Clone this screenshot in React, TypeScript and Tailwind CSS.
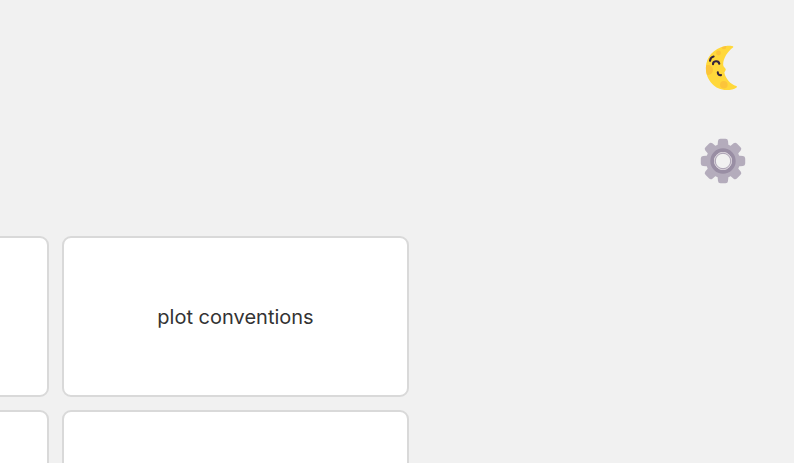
const TOOTH_ANGLES = [0, 45, 90, 135, 180, 225, 270, 315];

function MoonIcon() {
  return (
    <svg viewBox="0 0 56 56" className="size-14" aria-hidden="true">
      <defs>
        <clipPath id="crescent">
          <path d="M38 6.4C37 5.8 33.5 5.6 30 6.3C18.8 8.4 10.9 17.2 10.9 28C10.9 40.3 20 50 31.5 50.1C35.5 50.1 39 49.2 41.6 47.4C42.2 46.9 42 46.1 41.2 46C35.6 44.6 30.5 38.5 29.4 32.8C29.2 31.8 30.8 30.7 30.8 29.5C30.8 28 28.3 27.3 28.2 25C27.9 18.5 32.5 11.5 38 7.4C38.5 7 38.5 6.7 38 6.4Z" />
        </clipPath>
      </defs>
      <g clipPath="url(#crescent)">
        <rect width="56" height="56" fill="#ffd83b" />
        <circle cx="13" cy="30" r="5" fill="#fcc43a" />
        <circle cx="23.5" cy="13" r="2.4" fill="#fcc43a" />
        <circle cx="28.8" cy="44.7" r="3.8" fill="#fcc43a" />
        <circle cx="29" cy="7" r="2.3" fill="#fcc43a" />
      </g>
      <g fill="none" stroke="#33223f" strokeWidth="2.1" strokeLinecap="round">
        <path d="M15 20.8C15.3 18.5 16.8 16.9 18.6 16.5" />
        <path d="M18 24.3C17.8 20.8 23.6 20 24.3 23.8" />
        <path d="M22.8 32.4C22.7 34.5 24.2 35.5 26 35.1" />
      </g>
    </svg>
  );
}

function GearIcon() {
  return (
    <svg viewBox="0 0 56 56" className="size-14" aria-hidden="true">
      <g fill="#b4acbc">
        {TOOTH_ANGLES.map((angle) => (
          <path
            key={angle}
            transform={`rotate(${angle} 28 28)`}
            d="M25.4 5.8H30.6Q32.8 5.8 33 8L33.6 14H22.4L23 8Q23.2 5.8 25.4 5.8Z"
          />
        ))}
      </g>
      <circle cx="28" cy="28" r="12.5" fill="none" stroke="#b4acbc" strokeWidth="9" />
      <circle cx="28" cy="28" r="10.8" fill="#f1f1f1" stroke="#998ea4" strokeWidth="3.8" />
      <circle cx="28" cy="28" r="8.5" fill="none" stroke="#d6ced8" strokeWidth="1" />
      <circle cx="28" cy="28" r="7.7" fill="none" stroke="#998ea4" strokeWidth="0.8" />
    </svg>
  );
}

function Card({ label }: { label?: string }) {
  return (
    <div className="flex h-[161px] w-[347px] shrink-0 items-center justify-center rounded-[9px] border-2 border-[#d9d9d9] bg-white">
      {label}
    </div>
  );
}

export default function App() {
  return (
    <main className="h-screen overflow-hidden bg-[#f1f1f1] font-['Inter',sans-serif] text-[20px] text-[#333333]">
      <div className="flex h-[236px] flex-col items-end gap-[37px] pt-10 pr-[43px]">
        <button aria-label="Dark mode"><MoonIcon /></button>
        <button aria-label="Settings"><GearIcon /></button>
      </div>
      <div className="-ml-[298px] grid grid-cols-[347px_347px] gap-[13px]">
        <Card />
        <Card label="plot conventions" />
        <Card />
        <Card />
      </div>
    </main>
  );
}
